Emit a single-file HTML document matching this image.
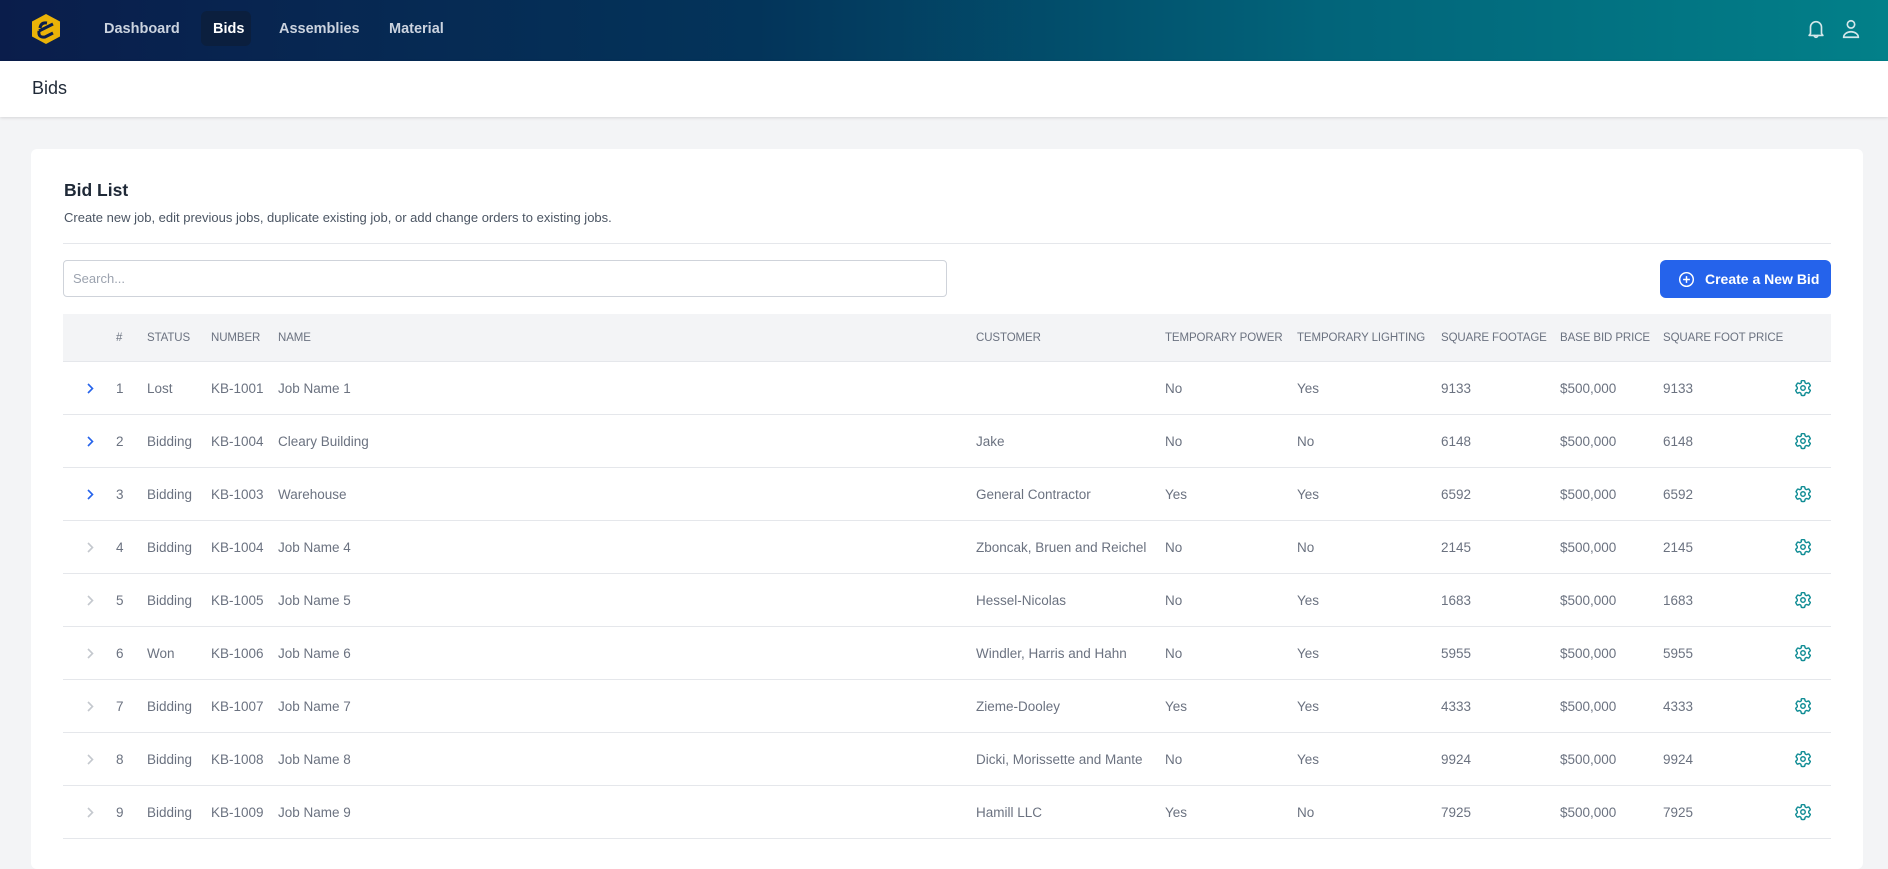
<!DOCTYPE html>
<html><head><meta charset="utf-8"><style>
*{box-sizing:border-box;margin:0;padding:0}
body{width:1888px;height:853px;overflow:hidden;background:#f3f4f6;font-family:"Liberation Sans",Arial,sans-serif;position:relative}
.nav{position:absolute;left:0;top:0;width:1888px;height:61px;background:linear-gradient(90deg,#0a1d4b 0%,#03345a 40%,#02647a 70%,#028089 100%)}
.nav a{position:absolute;top:21px;font-size:14.5px;font-weight:bold;color:#cbd3df;text-decoration:none}
.pill{position:absolute;left:201px;top:11px;width:50px;height:35px;background:#0b1f3e;border-radius:6px}
.hdr{position:absolute;left:0;top:61px;width:1888px;height:56px;background:#fff;box-shadow:0 1px 3px rgba(0,0,0,.12)}
.hdr span{position:absolute;left:32px;top:17px;font-size:18px;color:#1f2937}
.card{position:absolute;left:31px;top:149px;width:1832px;height:720px;background:#fff;border-radius:6px}
.t{position:absolute;white-space:nowrap}
.row{position:absolute;left:63px;width:1768px;height:53px;border-bottom:1px solid #e5e7eb}
.c{position:absolute;top:0;line-height:53px;font-size:13.5px;color:#6b7280;white-space:nowrap}
.th .c{font-size:11.5px;line-height:48px;color:#6b7280;letter-spacing:-0.1px}
</style></head><body>
<div class="nav">
<svg style="position:absolute;left:31px;top:13px" width="30" height="32" viewBox="0 0 30 32"><polygon points="15,1 29,8.5 29,23.5 15,31 1,23.5 1,8.5" fill="#eab308"/><path d="M8 18 L22 11 M8 18 Q7 25 14 24 L22 20 M9 15 Q10 9 16 10" stroke="#0a1d4b" stroke-width="3" fill="none"/></svg>
<div class="pill"></div>
<a style="left:104px">Dashboard</a>
<a style="left:213px;color:#fff">Bids</a>
<a style="left:279px">Assemblies</a>
<a style="left:389px">Material</a>
<svg style="position:absolute;left:1805px;top:18px" width="22" height="22" viewBox="0 0 24 24" fill="none" stroke="#d4e7ea" stroke-width="1.8" stroke-linecap="round" stroke-linejoin="round"><path d="M6 17V10a6 6 0 0 1 12 0v7l1.5 2h-15z"/><path d="M10 19a2 2 0 0 0 4 0"/></svg>
<svg style="position:absolute;left:1840px;top:17px" width="22" height="24" viewBox="0 0 24 24" fill="none" stroke="#d4e7ea" stroke-width="1.8" stroke-linecap="round"><circle cx="12" cy="7" r="4"/><path d="M4 21a8 6 0 0 1 16 0z"/></svg>
</div>
<div class="hdr"><span>Bids</span></div>
<div class="card"></div>
<div class="t" style="left:64px;top:180px;font-size:17.5px;font-weight:bold;color:#1f2937">Bid List</div>
<div class="t" style="left:64px;top:210px;font-size:13px;color:#4b5563">Create new job, edit previous jobs, duplicate existing job, or add change orders to existing jobs.</div>
<div style="position:absolute;left:63px;top:243px;width:1768px;height:1px;background:#e5e7eb"></div>
<div style="position:absolute;left:63px;top:260px;width:884px;height:37px;border:1px solid #cfd3da;border-radius:4px"><span class="t" style="left:9px;top:10px;font-size:13px;color:#9ca3af">Search...</span></div>
<div style="position:absolute;left:1660px;top:260px;width:171px;height:38px;background:#2563eb;border-radius:6px">
<svg style="position:absolute;left:18px;top:11px" width="17" height="17" viewBox="0 0 20 20" fill="none" stroke="#fff" stroke-width="1.7"><circle cx="10" cy="10" r="8"/><path d="M10 6v8M6 10h8"/></svg>
<span class="t" style="left:45px;top:11px;font-size:14px;font-weight:bold;color:#fff">Create a New Bid</span></div>
<div class="row th" style="top:314px;height:48px;background:#f3f4f6">
<span class="c" style="left:53px">#</span><span class="c" style="left:84px">STATUS</span><span class="c" style="left:148px">NUMBER</span><span class="c" style="left:215px">NAME</span><span class="c" style="left:913px">CUSTOMER</span><span class="c" style="left:1102px">TEMPORARY POWER</span><span class="c" style="left:1234px">TEMPORARY LIGHTING</span><span class="c" style="left:1378px">SQUARE FOOTAGE</span><span class="c" style="left:1497px">BASE BID PRICE</span><span class="c" style="left:1600px">SQUARE FOOT PRICE</span>
</div>
<div id="rows"></div>
<script>
var d=[["1","Lost","KB-1001","Job Name 1","","No","Yes","9133"],["2","Bidding","KB-1004","Cleary Building","Jake","No","No","6148"],["3","Bidding","KB-1003","Warehouse","General Contractor","Yes","Yes","6592"],["4","Bidding","KB-1004","Job Name 4","Zboncak, Bruen and Reichel","No","No","2145"],["5","Bidding","KB-1005","Job Name 5","Hessel-Nicolas","No","Yes","1683"],["6","Won","KB-1006","Job Name 6","Windler, Harris and Hahn","No","Yes","5955"],["7","Bidding","KB-1007","Job Name 7","Zieme-Dooley","Yes","Yes","4333"],["8","Bidding","KB-1008","Job Name 8","Dicki, Morissette and Mante","No","Yes","9924"],["9","Bidding","KB-1009","Job Name 9","Hamill LLC","Yes","No","7925"]];
var h="";var xs=[53,84,148,215,913,1102,1234,1378];
var gear='M9.6 3.1c.1-.5.5-.9 1-.9h2.8c.5 0 .9.4 1 .9l.3 1.7c.1.4.4.7.8.9l.6.3c.4.2.8.2 1.1 0l1.6-.6c.5-.2 1-.0 1.3.4l1.4 2.4c.3.4.2 1-.2 1.3l-1.3 1.1c-.3.3-.5.7-.4 1.1v.7c0 .4.1.8.4 1.1l1.3 1.1c.4.3.5.9.2 1.3l-1.4 2.4c-.3.4-.8.6-1.3.4l-1.6-.6c-.4-.1-.8-.1-1.1.1l-.6.3c-.4.2-.7.5-.8.9l-.3 1.7c-.1.5-.5.9-1 .9h-2.8c-.5 0-.9-.4-1-.9l-.3-1.7c-.1-.4-.4-.7-.8-.9l-.6-.3c-.4-.2-.8-.2-1.1-.1l-1.6.6c-.5.2-1 0-1.3-.4l-1.4-2.4c-.3-.4-.2-1 .2-1.3l1.3-1.1c.3-.3.5-.7.4-1.1v-.7c0-.4-.1-.8-.4-1.1L3.2 9.6c-.4-.3-.5-.9-.2-1.3l1.4-2.4c.3-.4.8-.6 1.3-.4l1.6.6c.4.1.8.1 1.1-.1l.6-.3c.4-.2.7-.5.8-.9z';
d.forEach(function(r,i){var col=i<3?"#2563eb":"#c4c8ce";
h+='<div class="row" style="top:'+(362+53*i)+'px"><svg style="position:absolute;left:22px;top:20px" width="10" height="13" viewBox="0 0 10 13"><path d="M3 2l4.5 4.5L3 11" stroke="'+col+'" stroke-width="1.6" fill="none"/></svg>';
r.forEach(function(v,j){h+='<span class="c" style="left:'+xs[j]+'px">'+v+'</span>';});
h+='<span class="c" style="left:1497px">$500,000</span><span class="c" style="left:1600px">'+r[7]+'</span>';
h+='<svg style="position:absolute;left:1731px;top:17px" width="18" height="18" viewBox="0 0 24 24" fill="none" stroke="#0f8c94" stroke-width="1.9" stroke-linejoin="round"><path d="'+gear+'"/><circle cx="12" cy="12" r="3"/></svg></div>';});
document.getElementById("rows").innerHTML=h;
</script>
</body></html>
